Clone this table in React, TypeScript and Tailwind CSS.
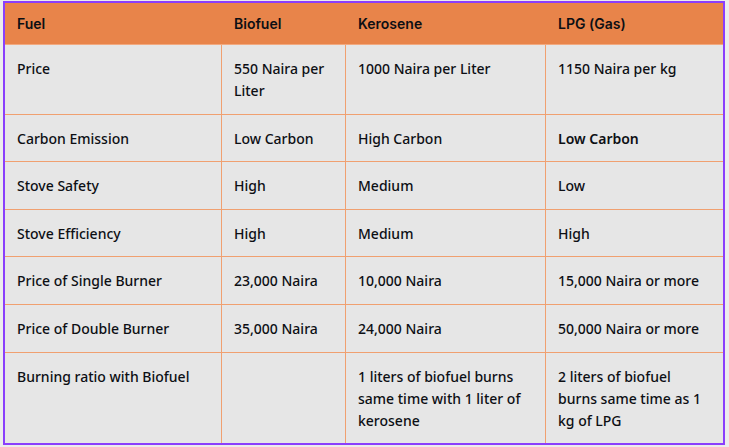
import React from "react";

const rows: string[][] = [
  ["Price", "550 Naira per Liter", "1000 Naira per Liter", "1150 Naira per kg"],
  ["Carbon Emission", "Low Carbon", "High Carbon", "Low Carbon"],
  ["Stove Safety", "High", "Medium", "Low"],
  ["Stove Efficiency", "High", "Medium", "High"],
  ["Price of Single Burner", "23,000 Naira", "10,000 Naira", "15,000 Naira or more"],
  ["Price of Double Burner", "35,000 Naira", "24,000 Naira", "50,000 Naira or more"],
  [
    "Burning ratio with Biofuel",
    "",
    "1 liters of biofuel burns same time with 1 liter of kerosene",
    "2 liters of biofuel burns same time as 1 kg of LPG",
  ],
];

const headers = ["Fuel", "Biofuel", "Kerosene", "LPG (Gas)"];

export default function App() {
  return (
    <div className="w-[729px] h-[447px] bg-[#ececec] pl-[3px] pt-[1px]">
      <div
        className="w-[722px] h-[444px] border-2 border-[#8a3ffc] bg-[#e6e6e6] overflow-hidden text-[14px] text-[#0d0f14] flex flex-col"
        style={{ fontFamily: '"Noto Sans", "Open Sans", sans-serif' }}
      >
        <div className="grid grid-cols-[216px_124px_200px_178px] bg-[#e8844a] border-b border-[#f2a97f]">
          {headers.map((h, i) => (
            <div
              key={i}
              className={`font-semibold leading-[21px] pt-[10px] pb-[10px] ${i === 0 ? "pl-[12px]" : "pl-[13px]"}`}
              style={{ fontFamily: 'Inter, "Noto Sans", sans-serif' }}
            >
              {h}
            </div>
          ))}
        </div>
        {rows.map((r, ri) => (
          <div
            key={ri}
            className={`grid grid-cols-[216px_124px_200px_178px] ${ri < rows.length - 1 ? "border-b border-[#f0a070]" : "flex-1"}`}
          >
            {r.map((c, ci) => (
              <div
                key={ci}
                className={`leading-[22px] pt-[13px] pb-[11.6px] pr-[10px] ${ci === 0 ? "pl-[12px]" : "pl-[12px] border-l border-[#f0a070]"} ${ri === 1 && ci === 3 ? "font-semibold" : "font-medium"}`}
              >
                {c}
              </div>
            ))}
          </div>
        ))}
      </div>
    </div>
  );
}
